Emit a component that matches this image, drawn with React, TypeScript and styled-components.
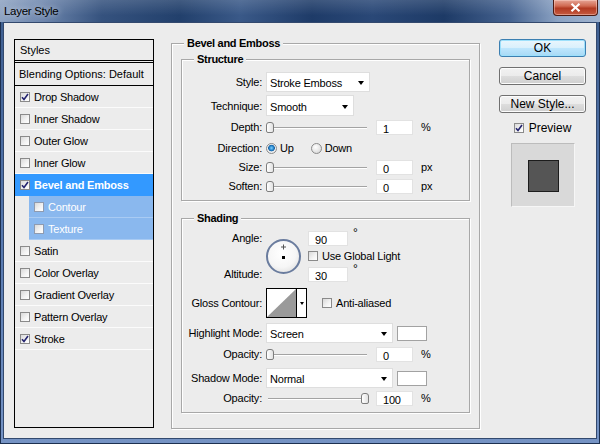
import styled, { createGlobalStyle } from 'styled-components';

const GlobalStyle = createGlobalStyle`
  html, body {
    margin: 0;
    padding: 0;
  }
  body {
    width: 600px;
    height: 444px;
    overflow: hidden;
    font-family: "Liberation Sans", Arial, sans-serif;
    font-size: 11px;
    color: #000;
  }
`;

const Window = styled.div`
  width: 600px;
  height: 444px;
  box-sizing: border-box;
  display: flex;
  flex-direction: column;
  border: 1px solid #1d3050;
  border-top: none;
  background: linear-gradient(180deg, #3d5d8e 0%, #5577ae 50%, #7593c4 100%);
`;

const TitleBar = styled.div`
  height: 22px;
  flex: none;
  display: flex;
  justify-content: space-between;
  align-items: flex-start;
  margin: 0 -1px;
  background:
    linear-gradient(180deg, rgba(255, 255, 255, 0.14) 0%, rgba(255, 255, 255, 0) 70%),
    linear-gradient(90deg, #8ea3c2 0%, #6d86ad 7%, #35527e 17%, #22406c 30%, #3a5988 40%, #1e3b68 52%, #2a4877 62%, #1d3a66 74%, #45628f 85%, #8ca3c4 93%, #9fb3cf 100%);
`;

const Title = styled.span`
  padding: 5px 0 0 4px;
  font-size: 11.5px;
  letter-spacing: -0.3px;
  color: #000;
  text-shadow: 0 0 6px rgba(255, 255, 255, 0.7);
`;

const CloseButton = styled.div`
  width: 45px;
  height: 16px;
  margin-right: 2px;
  box-sizing: border-box;
  display: flex;
  align-items: center;
  justify-content: center;
  border: 1px solid #4d1a12;
  border-top: none;
  border-radius: 0 0 4px 4px;
  background: linear-gradient(180deg, #e6a596 0%, #d06a52 40%, #b23a22 55%, #c55a40 100%);
  box-shadow: inset 0 0 0 1px rgba(255, 220, 210, 0.45);
`;

const Client = styled.div`
  flex: 1;
  margin: 0 2px 4px;
  box-sizing: border-box;
  border: 1px solid #33496e;
  background: #ececec;
  display: flex;
  align-items: flex-start;
  padding: 16px 0 0 10px;
`;

/* ---------- left list ---------- */

const StyleList = styled.div`
  width: 140px;
  height: 389px;
  flex: none;
  box-sizing: border-box;
  border: 1px solid #000;
  display: flex;
  flex-direction: column;
`;

const ListHeader = styled.div`
  height: 20px;
  padding-left: 5px;
  display: flex;
  align-items: center;
  border-bottom: 3px double #000;
`;

const BlendRow = styled.div`
  height: 22px;
  padding-left: 4px;
  display: flex;
  align-items: center;
  border-bottom: 1px solid #000;
`;

const ListRow = styled.div<{ $variant: 'normal' | 'selected' | 'sub' }>`
  height: 21px;
  display: flex;
  align-items: center;
  gap: 4px;
  padding-left: 5px;
  border-bottom: 1px solid ${p => (p.$variant === 'normal' ? '#fbfbfb' : p.$variant === 'sub' ? '#a9cbf3' : '#3399ff')};
  margin-left: ${p => (p.$variant === 'sub' ? '14px' : '0')};
  background: ${p => (p.$variant === 'selected' ? '#3399ff' : p.$variant === 'sub' ? '#8ab8ee' : 'transparent')};
  color: ${p => (p.$variant === 'normal' ? '#000' : '#fff')};
  font-weight: ${p => (p.$variant === 'selected' ? 'bold' : 'normal')};
  letter-spacing: -0.2px;
`;

const Box = styled.span<{ $dim?: boolean }>`
  width: 10px;
  height: 10px;
  flex: none;
  box-sizing: border-box;
  border: 1px solid ${p => (p.$dim ? '#8f9bb0' : '#8a8a8a')};
  background: linear-gradient(135deg, #d9d9d9 0%, #f4f4f4 60%, #fff 100%);
  display: flex;
  align-items: center;
  justify-content: center;
`;

const Check = ({ checked, dim }: { checked?: boolean; dim?: boolean }) => (
  <Box $dim={dim}>
    {checked && (
      <svg width="8" height="8" viewBox="0 0 8 8">
        <path d="M1 4.2 L3 6.5 L7 1" fill="none" stroke="#23236e" strokeWidth="1.6" />
      </svg>
    )}
  </Box>
);

/* ---------- group boxes ---------- */

const Group = styled.div<{ $h: number; $mt: number; $px: number }>`
  position: relative;
  box-sizing: border-box;
  height: ${p => p.$h}px;
  margin-top: ${p => p.$mt}px;
  padding: 0 ${p => p.$px}px;
  border: 1px solid #a8a8a8;
  box-shadow: inset 1px 1px 0 #fff, 1px 1px 0 #fff;
  display: flex;
  flex-direction: column;
`;

const MainGroup = styled(Group)`
  width: 309px;
  flex: none;
  margin-left: 17px;
  padding-top: 15px;
`;

const Legend = styled.span`
  position: absolute;
  top: -7px;
  left: 12px;
  padding: 0 3px;
  background: #ececec;
  font-weight: bold;
  letter-spacing: -0.3px;
  line-height: 13px;
`;

const FieldRow = styled.div<{ $h: number; $mt: number }>`
  height: ${p => p.$h}px;
  margin-top: ${p => p.$mt}px;
  display: flex;
  align-items: center;
  letter-spacing: -0.2px;
`;

const Label = styled.span`
  width: 80px;
  flex: none;
  margin-right: 4px;
  text-align: right;
`;

const Select = styled.div<{ $w: number }>`
  width: ${p => p.$w}px;
  height: 100%;
  box-sizing: border-box;
  flex: none;
  display: flex;
  align-items: center;
  justify-content: space-between;
  padding: 2px 5px 0 3px;
  background: #fff;
  border: 1px solid #dedede;
  &::after {
    content: '';
    border-left: 3.5px solid transparent;
    border-right: 3.5px solid transparent;
    border-top: 4px solid #000;
  }
`;

const NumberBox = styled.div<{ $w: number; $ml: number }>`
  width: ${p => p.$w}px;
  height: 15px;
  margin-left: ${p => p.$ml}px;
  flex: none;
  box-sizing: border-box;
  padding: 3px 0 0 6px;
  background: #fff;
  border: 1px solid #e2e2e2;
  line-height: 11px;
`;

const Unit = styled.span`
  margin-left: 8px;
`;

const Degree = styled.span`
  align-self: flex-start;
  margin: -4px 0 0 5px;
  font-size: 12px;
`;

const SliderTrack = styled.div`
  position: relative;
  width: 101px;
  height: 16px;
  flex: none;
  &::before {
    content: '';
    position: absolute;
    left: 2px;
    right: 0;
    top: 8px;
    height: 1px;
    background: #a3a3a3;
    box-shadow: 0 1px 0 #fff;
  }
`;

const SliderThumb = styled.div`
  position: absolute;
  top: 3px;
  width: 6px;
  height: 9px;
  border: 1px solid #7d7d7d;
  border-radius: 3px 3px 2px 2px;
  background: linear-gradient(90deg, #fff 0%, #e2e2e2 100%);
`;

const Slider = ({ value }: { value: number }) => (
  <SliderTrack>
    <SliderThumb style={{ left: Math.round(value * 95) }} />
  </SliderTrack>
);

const RadioOption = styled.span<{ $mr?: number }>`
  display: flex;
  align-items: center;
  gap: 3px;
  margin-right: ${p => p.$mr ?? 0}px;
`;

const Radio = styled.span<{ $on?: boolean }>`
  width: 11px;
  height: 11px;
  box-sizing: border-box;
  border-radius: 50%;
  border: 1px solid #8b8b8b;
  background: ${p =>
    p.$on
      ? 'radial-gradient(circle at 50% 45%, #7fd0ff 0%, #1f7fc8 35%, #1a5f9e 45%, #f4f4f4 55%, #dcdcdc 100%)'
      : 'radial-gradient(circle at 40% 35%, #fff 0%, #e8e8e8 50%, #cfcfcf 100%)'};
`;

const Swatch = styled.div`
  width: 30px;
  height: 15px;
  margin-left: 4px;
  box-sizing: border-box;
  background: #fff;
  border: 1px solid #a2a2a2;
`;

const CheckLabel = styled.span<{ $ml: number }>`
  display: flex;
  align-items: center;
  gap: 4px;
  margin-left: ${p => p.$ml}px;
`;

const AngleGrid = styled.div`
  margin-top: 11px;
  display: grid;
  grid-template-columns: 80px 38px auto;
  grid-template-rows: 16px 16px 16px;
  column-gap: 4px;
  row-gap: 2px;
  align-items: center;
  letter-spacing: -0.2px;
`;

const GridLabel = styled.span<{ $row: number }>`
  grid-column: 1;
  grid-row: ${p => p.$row};
  text-align: right;
`;

const GridCell = styled.div<{ $row: number }>`
  grid-column: 3;
  grid-row: ${p => p.$row};
  display: flex;
  align-items: center;
  height: 100%;
`;

const Dial = styled.div`
  grid-column: 2;
  grid-row: 1 / span 3;
  width: 35px;
  height: 35px;
  box-sizing: border-box;
  border-radius: 50%;
  border: 2px solid #6a7c9e;
  background: radial-gradient(circle at 45% 40%, #fff 0%, #f6f6f6 55%, #d4d4d4 100%);
  display: flex;
  align-items: center;
  justify-content: center;
`;

const ContourPicker = styled.div`
  width: 41px;
  height: 30px;
  flex: none;
  box-sizing: border-box;
  border: 1px solid #000;
  display: flex;
  background: #fff;
`;

const ContourArrow = styled.div`
  flex: 1;
  border-left: 1px solid #000;
  display: flex;
  align-items: center;
  justify-content: center;
  &::after {
    content: '';
    border-left: 2.5px solid transparent;
    border-right: 2.5px solid transparent;
    border-top: 3px solid #000;
  }
`;

/* ---------- right column ---------- */

const SideColumn = styled.div`
  width: 87px;
  flex: none;
  margin-left: 19px;
  display: flex;
  flex-direction: column;
  align-items: center;
`;

const Button = styled.div<{ $primary?: boolean; $mt: number }>`
  width: 87px;
  height: 18px;
  margin-top: ${p => p.$mt}px;
  box-sizing: border-box;
  border-radius: 3px;
  display: flex;
  align-items: center;
  justify-content: center;
  font-size: 12px;
  border: 1px solid ${p => (p.$primary ? '#3c7fb1' : '#707070')};
  background: ${p =>
    p.$primary
      ? 'linear-gradient(180deg, #eaf6fd 0%, #d9f0fc 50%, #bee6fd 51%, #a7d9f5 100%)'
      : 'linear-gradient(180deg, #f2f2f2 0%, #ebebeb 50%, #dddddd 51%, #cfcfcf 100%)'};
  box-shadow: ${p => (p.$primary ? 'inset 0 0 0 1px #9de0fb' : 'inset 0 0 0 1px #fcfcfc')};
`;

const PreviewToggle = styled.div`
  margin-top: 7px;
  height: 16px;
  display: flex;
  align-items: center;
  gap: 5px;
  font-size: 12px;
`;

const PreviewBox = styled.div`
  width: 64px;
  height: 64px;
  margin-top: 7px;
  box-sizing: border-box;
  background: #d9d9d9;
  border: 1px solid;
  border-color: #bcbcbc #f6f6f6 #f6f6f6 #bcbcbc;
  display: flex;
  align-items: center;
  justify-content: center;
`;

const PreviewSwatch = styled.div`
  width: 31px;
  height: 32px;
  margin: 1px 0 0 1px;
  box-sizing: border-box;
  background: #555;
  border: 1px solid #1c1c1c;
`;

const effects: { name: string; checked?: boolean; variant?: 'normal' | 'selected' | 'sub' }[] = [
  { name: 'Drop Shadow', checked: true },
  { name: 'Inner Shadow' },
  { name: 'Outer Glow' },
  { name: 'Inner Glow' },
  { name: 'Bevel and Emboss', checked: true, variant: 'selected' },
  { name: 'Contour', variant: 'sub' },
  { name: 'Texture', variant: 'sub' },
  { name: 'Satin' },
  { name: 'Color Overlay' },
  { name: 'Gradient Overlay' },
  { name: 'Pattern Overlay' },
  { name: 'Stroke', checked: true },
];

const App = () => {
  return (
    <Window>
      <GlobalStyle />
      <TitleBar>
        <Title>Layer Style</Title>
        <CloseButton>
          <svg width="11" height="9" viewBox="0 0 11 9">
            <path d="M1.5 0.8 L9.5 8.2 M9.5 0.8 L1.5 8.2" stroke="#fff" strokeWidth="2.2" />
          </svg>
        </CloseButton>
      </TitleBar>

      <Client>
        <StyleList>
          <ListHeader>Styles</ListHeader>
          <BlendRow>Blending Options: Default</BlendRow>
          {effects.map(effect => (
            <ListRow key={effect.name} $variant={effect.variant ?? 'normal'}>
              <Check checked={effect.checked} dim={effect.variant === 'sub'} />
              {effect.name}
            </ListRow>
          ))}
        </StyleList>

        <MainGroup $h={386} $mt={4} $px={9}>
          <Legend>Bevel and Emboss</Legend>

          <Group $h={142} $mt={0} $px={0}>
            <Legend>Structure</Legend>
            <FieldRow $h={20} $mt={12}>
              <Label>Style:</Label>
              <Select $w={104}>Stroke Emboss</Select>
            </FieldRow>
            <FieldRow $h={21} $mt={3}>
              <Label>Technique:</Label>
              <Select $w={88}>Smooth</Select>
            </FieldRow>
            <FieldRow $h={16} $mt={3}>
              <Label>Depth:</Label>
              <Slider value={0} />
              <NumberBox $w={37} $ml={9}>1</NumberBox>
              <Unit>%</Unit>
            </FieldRow>
            <FieldRow $h={16} $mt={5}>
              <Label>Direction:</Label>
              <RadioOption $mr={17}>
                <Radio $on />
                Up
              </RadioOption>
              <RadioOption>
                <Radio />
                Down
              </RadioOption>
            </FieldRow>
            <FieldRow $h={16} $mt={3}>
              <Label>Size:</Label>
              <Slider value={0} />
              <NumberBox $w={37} $ml={9}>0</NumberBox>
              <Unit>px</Unit>
            </FieldRow>
            <FieldRow $h={16} $mt={3}>
              <Label>Soften:</Label>
              <Slider value={0} />
              <NumberBox $w={37} $ml={9}>0</NumberBox>
              <Unit>px</Unit>
            </FieldRow>
          </Group>

          <Group $h={195} $mt={17} $px={0}>
            <Legend>Shading</Legend>
            <AngleGrid>
              <GridLabel $row={1}>Angle:</GridLabel>
              <Dial>
                <svg width="31" height="31" viewBox="0 0 31 31">
                  <path d="M15.5 3.5 V8.5 M13 6 H18" stroke="#555" strokeWidth="1" />
                  <rect x="14" y="15" width="3" height="3" fill="#000" />
                </svg>
              </Dial>
              <GridCell $row={1}>
                <NumberBox $w={40} $ml={0}>90</NumberBox>
                <Degree>°</Degree>
              </GridCell>
              <GridCell $row={2}>
                <CheckLabel $ml={0}>
                  <Check />
                  Use Global Light
                </CheckLabel>
              </GridCell>
              <GridLabel $row={3}>Altitude:</GridLabel>
              <GridCell $row={3}>
                <NumberBox $w={40} $ml={0}>30</NumberBox>
                <Degree>°</Degree>
              </GridCell>
            </AngleGrid>

            <FieldRow $h={30} $mt={6}>
              <Label>Gloss Contour:</Label>
              <ContourPicker>
                <svg width="29" height="28" viewBox="0 0 29 28">
                  <polygon points="0,28 29,0 29,28" fill="#9a9a9a" />
                </svg>
                <ContourArrow />
              </ContourPicker>
              <CheckLabel $ml={15}>
                <Check />
                Anti-aliased
              </CheckLabel>
            </FieldRow>

            <FieldRow $h={20} $mt={5}>
              <Label>Highlight Mode:</Label>
              <Select $w={127}>Screen</Select>
              <Swatch />
            </FieldRow>
            <FieldRow $h={16} $mt={3}>
              <Label>Opacity:</Label>
              <Slider value={0} />
              <NumberBox $w={37} $ml={9}>0</NumberBox>
              <Unit>%</Unit>
            </FieldRow>
            <FieldRow $h={20} $mt={6}>
              <Label>Shadow Mode:</Label>
              <Select $w={127}>Normal</Select>
              <Swatch />
            </FieldRow>
            <FieldRow $h={16} $mt={2}>
              <Label>Opacity:</Label>
              <Slider value={1} />
              <NumberBox $w={37} $ml={9}>100</NumberBox>
              <Unit>%</Unit>
            </FieldRow>
          </Group>
        </MainGroup>

        <SideColumn>
          <Button $primary $mt={0}>OK</Button>
          <Button $mt={10}>Cancel</Button>
          <Button $mt={10}>New Style...</Button>
          <PreviewToggle>
            <Check checked />
            Preview
          </PreviewToggle>
          <PreviewBox>
            <PreviewSwatch />
          </PreviewBox>
        </SideColumn>
      </Client>
    </Window>
  );
};

export default App;
